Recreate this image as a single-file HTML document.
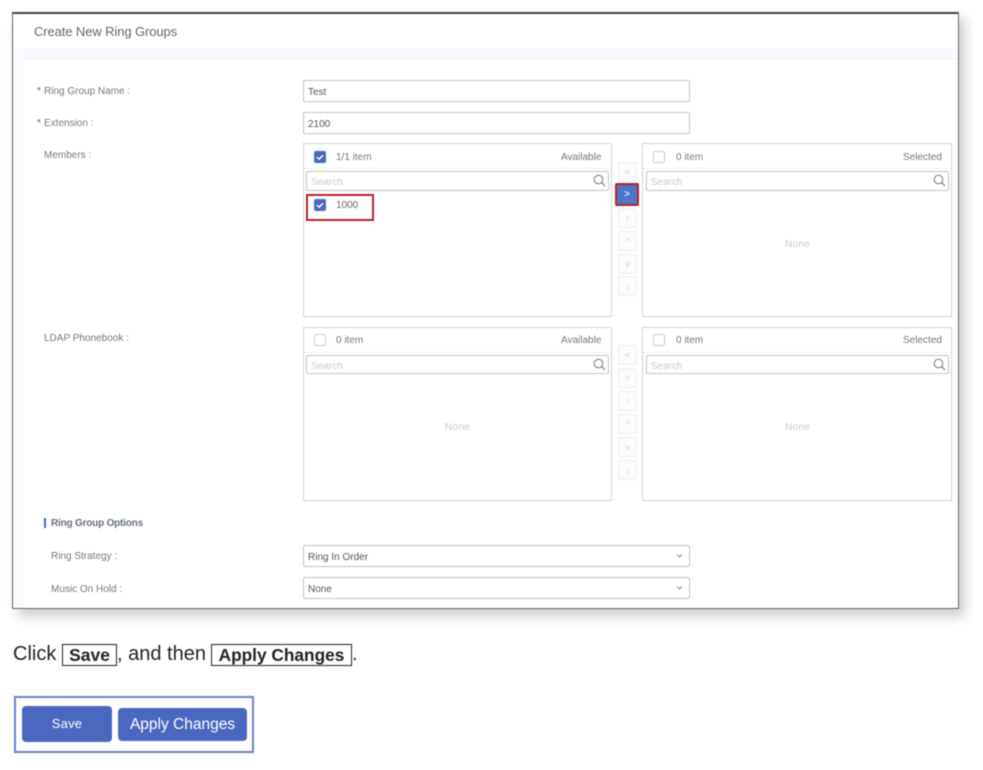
<!DOCTYPE html>
<html><head><meta charset="utf-8"><style>
html,body{margin:0;padding:0;background:#fff}
body{width:983px;height:770px;position:relative;overflow:hidden;font-family:"Liberation Sans",sans-serif}
div,span,svg{position:absolute;box-sizing:border-box}
#w{left:0;top:0;width:983px;height:770px;filter:blur(.4px)}
.t{white-space:nowrap;font-size:10px;letter-spacing:0;color:#777;line-height:14px}
.inp{left:303px;width:387px;border:1px solid #c4c4c4;border-radius:2px;background:#fff;height:22px}
.v{left:308px;color:#555;font-size:10px;letter-spacing:0}
.box{border:1px solid #d4d4d4;background:#fff;width:310px;height:175px}
.s{border:1px solid #c4c4c4;border-radius:2px;width:303px;height:20px;background:#fff}
.ln{height:1px;background:#f0f0f0;width:308px}
.ph{color:#ccc;font-size:10px;letter-spacing:0}
.cb{width:12px;height:12px;border:1px solid #ccc;border-radius:2px;background:#fff}
.cb.on{background:#4b68c0;border-color:#4b68c0}
.op{left:618px;width:19px;height:20px;border:1px solid #ececec;border-radius:2px;background:#fcfcfc;color:#d2d2d2;font-size:9px;line-height:18px;text-align:center}
.none{color:#ccc;font-size:10px;letter-spacing:.3px}
</style></head><body><div id="w">
<div style="left:12px;top:12px;width:947px;height:597px;background:#fff;border:1px solid #666;border-top:2px solid #444;box-shadow:6px 7px 11px rgba(0,0,0,.2)"></div>
<div style="left:13px;top:48px;width:945px;height:10px;background:#f7f9fd"></div>
<div style="left:13px;top:48px;width:11px;height:559px;background:#f9fbfd"></div>
<div style="left:24px;top:58px;width:934px;height:1px;background:#eef0f4"></div>
<div class="t" style="left:34px;top:25px;font-size:13px;letter-spacing:-.1px;color:#666">Create New Ring Groups</div>

<div class="t" style="left:37px;top:85px;color:#c0392b">*</div><div class="t" style="left:44px;top:85px">Ring Group Name :</div>
<div class="t" style="left:37px;top:117px;color:#c0392b">*</div><div class="t" style="left:44px;top:117px">Extension :</div>
<div class="t" style="left:44px;top:149px">Members :</div>
<div class="t" style="left:44px;top:332px">LDAP Phonebook :</div>

<div class="inp" style="top:80px"></div><div class="t v" style="top:86px">Test</div>
<div class="inp" style="top:112px"></div><div class="t v" style="top:118px">2100</div>

<!-- Transfer 1 left -->
<div class="box" style="left:303px;top:143px;width:309px;height:174px"></div>
<div class="ln" style="left:304px;top:168px;width:307px"></div>
<div class="cb on" style="left:314px;top:151px"></div>
<svg style="left:314px;top:151px" width="12" height="12"><path d="M3 6l2.2 2.2L9 4.2" fill="none" stroke="#fff" stroke-width="1.4"/></svg>
<div class="t" style="left:336px;top:151px">1/1 item</div>
<div class="t" style="left:561px;top:151px">Available</div>
<div class="s" style="left:306px;top:171px"></div>
<div class="t ph" style="left:311px;top:176px">Search</div>
<svg style="left:593px;top:174px" width="13" height="13"><circle cx="5.5" cy="5.5" r="4.3" fill="none" stroke="#777" stroke-width="1"/><path d="M8.7 8.7l3.3 3.3" stroke="#777" stroke-width="1.1"/></svg>
<div style="left:306px;top:194px;width:68px;height:27px;border:2px solid #b5232f"></div>
<div class="cb on" style="left:314px;top:199px"></div>
<svg style="left:314px;top:199px" width="12" height="12"><path d="M3 6l2.2 2.2L9 4.2" fill="none" stroke="#fff" stroke-width="1.4"/></svg>
<div class="t" style="left:336px;top:199px;color:#666">1000</div>

<!-- Transfer 1 ops -->
<div class="op" style="top:162px">&lt;</div>
<div class="op" style="left:615px;top:183px;width:24px;height:23px;background:#4f74c8;border:2px solid #b5232f;color:#fff;font-size:10px;line-height:20px">&gt;</div>
<div class="op" style="top:208px">↑</div>
<div class="op" style="top:231px">^</div>
<div class="op" style="top:254px">v</div>
<div class="op" style="top:276px">↓</div>

<!-- Transfer 1 right -->
<div class="box" style="left:642px;top:143px;height:174px"></div>
<div class="ln" style="left:643px;top:168px"></div>
<div class="cb" style="left:653px;top:151px"></div>
<div class="t" style="left:676px;top:151px">0 item</div>
<div class="t" style="left:903px;top:151px">Selected</div>
<div class="s" style="left:646px;top:171px"></div>
<div class="t ph" style="left:651px;top:176px">Search</div>
<svg style="left:933px;top:174px" width="13" height="13"><circle cx="5.5" cy="5.5" r="4.3" fill="none" stroke="#777" stroke-width="1"/><path d="M8.7 8.7l3.3 3.3" stroke="#777" stroke-width="1.1"/></svg>
<div class="t none" style="left:785px;top:238px">None</div>

<!-- Transfer 2 left -->
<div class="box" style="left:303px;top:327px;height:174px;width:309px"></div>
<div class="ln" style="left:304px;top:352px;width:307px"></div>
<div class="cb" style="left:314px;top:334px"></div>
<div class="t" style="left:336px;top:334px">0 item</div>
<div class="t" style="left:561px;top:334px">Available</div>
<div class="s" style="left:306px;top:355px;height:19px"></div>
<div class="t ph" style="left:311px;top:360px">Search</div>
<svg style="left:593px;top:358px" width="13" height="13"><circle cx="5.5" cy="5.5" r="4.3" fill="none" stroke="#777" stroke-width="1"/><path d="M8.7 8.7l3.3 3.3" stroke="#777" stroke-width="1.1"/></svg>
<div class="t none" style="left:445px;top:421px">None</div>

<!-- Transfer 2 ops -->
<div class="op" style="top:345px">&lt;</div>
<div class="op" style="top:368px">&gt;</div>
<div class="op" style="top:391px">↑</div>
<div class="op" style="top:414px">^</div>
<div class="op" style="top:437px">v</div>
<div class="op" style="top:460px">↓</div>

<!-- Transfer 2 right -->
<div class="box" style="left:642px;top:327px;height:174px"></div>
<div class="ln" style="left:643px;top:352px"></div>
<div class="cb" style="left:653px;top:334px"></div>
<div class="t" style="left:676px;top:334px">0 item</div>
<div class="t" style="left:903px;top:334px">Selected</div>
<div class="s" style="left:646px;top:355px;height:19px"></div>
<div class="t ph" style="left:651px;top:360px">Search</div>
<svg style="left:933px;top:358px" width="13" height="13"><circle cx="5.5" cy="5.5" r="4.3" fill="none" stroke="#777" stroke-width="1"/><path d="M8.7 8.7l3.3 3.3" stroke="#777" stroke-width="1.1"/></svg>
<div class="t none" style="left:785px;top:421px">None</div>

<!-- Options -->
<div style="left:44px;top:518px;width:2px;height:10px;background:#4b68c0"></div>
<div class="t" style="left:51px;top:517px;font-weight:bold;font-size:10px;letter-spacing:-.2px;color:#66707c">Ring Group Options</div>
<div class="t" style="left:51px;top:550px">Ring Strategy :</div>
<div class="t" style="left:51px;top:583px">Music On Hold :</div>
<div class="inp" style="top:545px"></div><div class="t v" style="top:551px">Ring In Order</div>
<div class="inp" style="top:577px"></div><div class="t v" style="top:583px">None</div>
<svg style="left:676px;top:553px" width="7" height="6"><path d="M1 1.5l2.5 2.5L6 1.5" fill="none" stroke="#888" stroke-width="1"/></svg>
<svg style="left:676px;top:585px" width="7" height="6"><path d="M1 1.5l2.5 2.5L6 1.5" fill="none" stroke="#888" stroke-width="1"/></svg>

<!-- Instruction -->
<div class="t" style="left:13px;top:643px;font-size:20px;line-height:23px;letter-spacing:0;color:#222">Click</div>
<div class="t" style="left:62px;top:644px;width:55px;height:22px;border:1px solid #222;text-align:center;font-size:17.5px;line-height:21px;font-weight:bold;letter-spacing:0;color:#222">Save</div>
<div class="t" style="left:117px;top:643px;font-size:20px;line-height:23px;letter-spacing:0;color:#222">, and then</div>
<div class="t" style="left:211px;top:644px;width:141px;height:22px;border:1px solid #222;text-align:center;font-size:17.3px;line-height:21px;font-weight:bold;letter-spacing:0;color:#222">Apply Changes</div>
<div class="t" style="left:352px;top:643px;font-size:20px;line-height:23px;letter-spacing:0;color:#222">.</div>

<!-- Buttons -->
<div style="left:14px;top:696px;width:240px;height:57px;border:2px solid #6b82cc"></div>
<div class="t" style="left:22px;top:706px;width:90px;height:36px;background:#4b68c0;border-radius:4px;color:#fff;font-size:13px;line-height:35px;letter-spacing:.2px;text-align:center">Save</div>
<div class="t" style="left:118px;top:708px;width:129px;height:33px;background:#4b68c0;border-radius:4px;color:#fff;font-size:15.5px;line-height:34px;letter-spacing:0;text-align:center">Apply Changes</div>
</div></body></html>
